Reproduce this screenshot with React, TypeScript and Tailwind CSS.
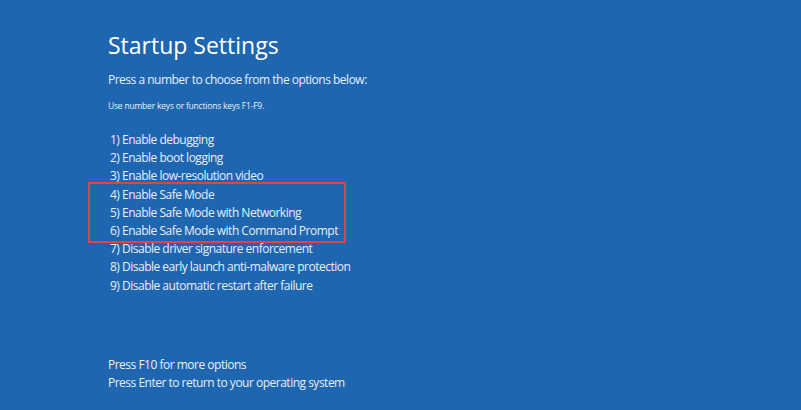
import React from "react";

const options = [
  "1) Enable debugging",
  "2) Enable boot logging",
  "3) Enable low-resolution video",
  "4) Enable Safe Mode",
  "5) Enable Safe Mode with Networking",
  "6) Enable Safe Mode with Command Prompt",
  "7) Disable driver signature enforcement",
  "8) Disable early launch anti-malware protection",
  "9) Disable automatic restart after failure",
];

export default function App() {
  return (
    <div className="w-[801px] h-[410px] bg-[#1f66b0] text-[#e8eef7] font-['Open_Sans',sans-serif] overflow-hidden">
      <div className="pl-[108px] pt-[30px]">
        <h1 className="text-[23px] leading-[30px] text-white">Startup Settings</h1>
        <p className="mt-[11px] text-[12px] leading-[18px] tracking-[-0.5px]">Press a number to choose from the options below:</p>
        <p className="mt-[10px] text-[8.5px] leading-[14px] tracking-[-0.2px]">Use number keys or functions keys F1-F9.</p>
        <ul className="mt-[18px] pl-[2px] text-[12px] leading-[18.2px] tracking-[-0.5px]">
          {options.slice(0, 3).map((o) => (
            <li key={o}>{o}</li>
          ))}
          <li className="relative">
            <div className="absolute left-[-22px] top-[-4px] w-[258px] h-[61px] border-2 border-[#e0463c]" />
            {options[3]}
          </li>
          {options.slice(4).map((o) => (
            <li key={o}>{o}</li>
          ))}
        </ul>
        <div className="mt-[61px] text-[12px] leading-[18px] tracking-[-0.5px]">
          <p>Press F10 for more options</p>
          <p>Press Enter to return to your operating system</p>
        </div>
      </div>
    </div>
  );
}
